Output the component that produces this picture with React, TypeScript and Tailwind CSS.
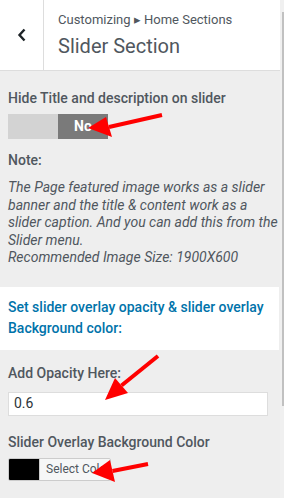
import React from "react";

function Arrow({ tail, tip, a, b }: { tail: [number, number]; tip: [number, number]; a: [number, number]; b: [number, number] }) {
	const base: [number, number] = [(a[0] + b[0]) / 2, (a[1] + b[1]) / 2];
	return (
		<g>
			<line x1={tail[0]} y1={tail[1]} x2={base[0]} y2={base[1]} stroke="#ff0000" strokeWidth={4} />
			<polygon points={`${tip[0]},${tip[1]} ${a[0]},${a[1]} ${b[0]},${b[1]}`} fill="#ff0000" />
		</g>
	);
}

export default function App() {
	return (
		<div className="relative flex w-[284px] h-[498px] overflow-hidden bg-[#eeeeee] font-['Roboto',sans-serif] text-[#50575e]">
			<div className="w-[280px] flex flex-col">
				{/* Header */}
				<div className="flex h-[71px] bg-white border-b border-[#dddddd]">
					<div className="w-[44px] flex items-center justify-center border-r border-[#dddddd]">
						<svg width="10" height="14" viewBox="0 0 10 14">
							<polyline points="7.5,1.5 2.5,7 7.5,12.5" fill="none" stroke="#1d2327" strokeWidth="2.4" />
						</svg>
					</div>
					<div className="pl-[14px] pt-[11px]">
						<div className="text-[13px] leading-[18px] text-[#50575e]">Customizing ▸ Home Sections</div>
						<div className="mt-[3px] text-[20px] leading-[28px] text-[#50575e]">Slider Section</div>
					</div>
				</div>

				{/* Hide title */}
				<div className="px-[8px] pt-[17px]">
					<div className="text-[14px] leading-[20px] font-medium">Hide Title and description on slider</div>
					<div className="mt-[6px] flex w-[100px] h-[25px]">
						<div className="w-[50px] bg-[#d3d3d3]" />
						<div className="w-[50px] bg-[#7a7a7a] flex items-center justify-center text-white text-[14px] font-bold">No</div>
					</div>
					<div className="mt-[11px] text-[14px] leading-[20px] font-medium">Note:</div>
					<p className="mt-[9px] w-[272px] text-[14px] leading-[17.5px] italic text-[#50575e]">
						The Page featured image works as a slider banner and the title &amp; content work as a slider caption. And you can add this from the Slider menu.
						<br />
						Recommended Image Size: 1900X600
					</p>
				</div>

				{/* Blue heading */}
				<div className="mt-[20px] bg-white px-[8px] pt-[10px] pb-[11px] w-[279px]">
					<div className="text-[14px] leading-[21px] font-medium text-[#0073aa]">
						Set slider overlay opacity &amp; slider overlay Background color:
					</div>
				</div>

				{/* Opacity */}
				<div className="px-[8px] pt-[13px]">
					<div className="text-[14px] leading-[20px] font-medium">Add Opacity Here:</div>
					<div className="mt-[9px] w-[260px] h-[24px] bg-white border border-[#dddddd] flex items-center px-[5px] text-[14px] text-[#2c3338]">0.6</div>
					<div className="mt-[16px] text-[14px] leading-[20px] font-medium">Slider Overlay Background Color</div>
					<div className="mt-[6px] flex w-[103px] h-[23px] border border-[#cccccc] bg-[#f6f7f7] rounded-[2px] overflow-hidden">
						<div className="w-[30px] shrink-0 bg-black" />
						<div className="flex-1 flex items-center pl-[6px] whitespace-nowrap overflow-hidden text-[12px] text-[#50575e] border-l border-[#cccccc]">Select Color</div>
					</div>
				</div>
			</div>

			{/* Scrollbar */}
			<div className="w-[4px] bg-[#f0f0f0] pt-[12px]">
				<div className="ml-[2px] w-[2px] h-[394px] bg-[#c1c1c1]" />
			</div>

			{/* Annotation arrows */}
			<svg className="absolute top-0 left-0 pointer-events-none" width="284" height="498" viewBox="0 0 284 498">
				<Arrow tail={[162, 115]} tip={[88, 128]} a={[106, 117]} b={[112, 137]} />
				<Arrow tail={[158, 356]} tip={[105, 400]} a={[115, 378]} b={[128, 393]} />
				<Arrow tail={[148, 464]} tip={[92, 473]} a={[110, 460]} b={[115, 482]} />
			</svg>
		</div>
	);
}
